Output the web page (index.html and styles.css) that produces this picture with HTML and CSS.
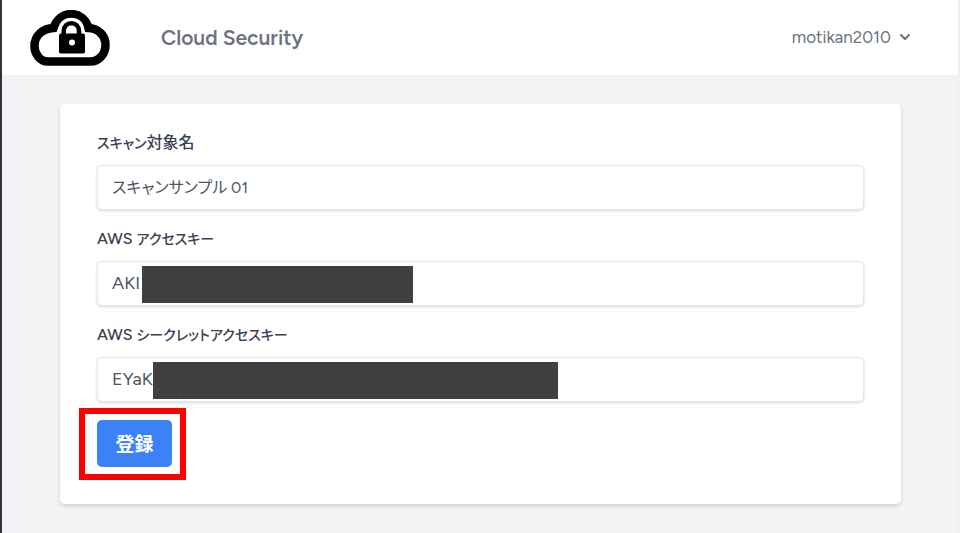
FILE: index.html
```html
<!DOCTYPE html>
<html lang="ja">
<head>
    <meta charset="UTF-8">
    <meta name="viewport" content="width=device-width, initial-scale=1.0">
    <title>Cloud Security</title>
    <link rel="stylesheet" href="styles.css">
</head>
<body>

    <header class="header">
        <a class="logo" href="#" aria-label="Cloud Security">
            <svg viewBox="0 0 80 56" width="80" height="56">
                <path d="M18 51.500C9.800 51.500 4.500 44 4.500 36C4.500 25.500 12.500 18.500 23.500 18C26.500 9.500 33 4 41 4C49.500 4 56.500 10 58.500 18C68.500 18.500 75.500 25.500 75.500 35C75.500 44 69 51.500 60.500 51.500Z" fill="#fff" stroke="#000" stroke-width="8.500"/>
                <path d="M28.500 24V20C28.500 12.500 34 7.700 41.300 7.700S54.200 12.500 54.200 20V24H57V45H27V24Z" fill="#fff"/>
                <path d="M33.700 26V21C33.700 16.200 37 13.200 41.300 13.200S49 16.200 49 21V26" fill="none" stroke="#000" stroke-width="4.500"/>
                <rect x="29" y="23.500" width="26" height="20" rx="2"/>
                <circle cx="42" cy="32.500" r="3" fill="#fff"/>
            </svg>
        </a>
        <a class="site-name" href="#">Cloud Security</a>
        <button class="user-menu" type="button">
            motikan2010
            <svg viewBox="0 0 10 6" width="10" height="6">
                <path d="M1 1L5 5L9 1" fill="none" stroke="#6b7280" stroke-width="2" stroke-linecap="round" stroke-linejoin="round"/>
            </svg>
        </button>
    </header>

    <main class="main">
        <form class="card">
            <div class="field">
                <label for="name"><span class="kana">スキャン</span>対象名</label>
                <input class="input-ja" type="text" id="name" name="name" value="スキャンサンプル 01">
            </div>
            <div class="field">
                <label for="access-key">AWS <span class="kana">アクセスキー</span></label>
                <input type="text" id="access-key" name="access-key" value="AKI">
                <span class="mask mask-access"></span>
            </div>
            <div class="field">
                <label for="secret-key">AWS <span class="kana">シークレットアクセスキー</span></label>
                <input type="text" id="secret-key" name="secret-key" value="EYaK">
                <span class="mask mask-secret"></span>
            </div>
            <div class="actions">
                <button class="submit" type="submit">登録</button>
                <span class="highlight"></span>
            </div>
        </form>
    </main>

</body>
</html>
```

FILE: styles.css
```css
* {
    box-sizing: border-box;
}

body {
    margin: 0;
    min-height: 100vh;
    background-color: #f2f3f5;
    border-left: 2px solid #30343b;
    border-right: 2px solid #f0f0f1;
    color: #374151;
    font-family: Figtree, Lato, "Noto Sans CJK JP", sans-serif;
    font-feature-settings: "palt";
}

/* Header */
.header {
    display: flex;
    align-items: center;
    height: 75px;
    padding: 0 48px 0 28px;
    background-color: #fff;
}

.logo {
    display: block;
    height: 56px;
}

.logo svg {
    display: block;
}

.site-name {
    margin-left: 51px;
    color: #6b7280;
    font-size: 21px;
    font-weight: 600;
    text-decoration: none;
}

.user-menu {
    display: flex;
    align-items: center;
    gap: 9px;
    margin-left: auto;
    padding: 0 0 2px;
    border: none;
    background: none;
    color: #6b7280;
    font-family: inherit;
    font-size: 17px;
    font-weight: 400;
    cursor: pointer;
}

/* Form card */
.main {
    padding: 29px 57px 29px 58px;
}

.card {
    padding: 27px 37px 37px;
    border-radius: 5px;
    background-color: #fff;
    box-shadow: 0 2px 4px rgba(0, 0, 0, 0.14);
}

.field {
    position: relative;
    margin-bottom: 17px;
}

.field label {
    display: block;
    margin-bottom: 10px;
    font-size: 16px;
    font-weight: 500;
    line-height: 24px;
}

.kana {
    font-size: 14px;
    line-height: 1;
}

.field input {
    display: block;
    width: 100%;
    height: 45px;
    padding: 0 14px 2px;
    border: 1px solid #e5e7eb;
    border-radius: 5px;
    background-color: #fff;
    box-shadow: 0 1px 3px rgba(0, 0, 0, 0.16);
    color: #4b5563;
    font-family: inherit;
    font-feature-settings: inherit;
    font-size: 18px;
}

.field .input-ja {
    padding-bottom: 4px;
    font-size: 16px;
}

/* Bars that cover the keys */
.mask {
    position: absolute;
    bottom: 3px;
    height: 37px;
    background-color: #404040;
}

.mask-access {
    left: 45px;
    width: 271px;
}

.mask-secret {
    left: 56px;
    width: 405px;
}

.actions {
    position: relative;
    width: fit-content;
    margin-top: 18px;
}

.submit {
    display: block;
    min-width: 75px;
    height: 47px;
    padding: 0 18px 2px;
    border: none;
    border-radius: 5px;
    background-color: #3b82f6;
    color: #fff;
    font-family: inherit;
    font-size: 19px;
    font-weight: 700;
    cursor: pointer;
}

.highlight {
    position: absolute;
    inset: -12px -14px -13px -18px;
    border: 6px solid #f00;
    pointer-events: none;
}
```
